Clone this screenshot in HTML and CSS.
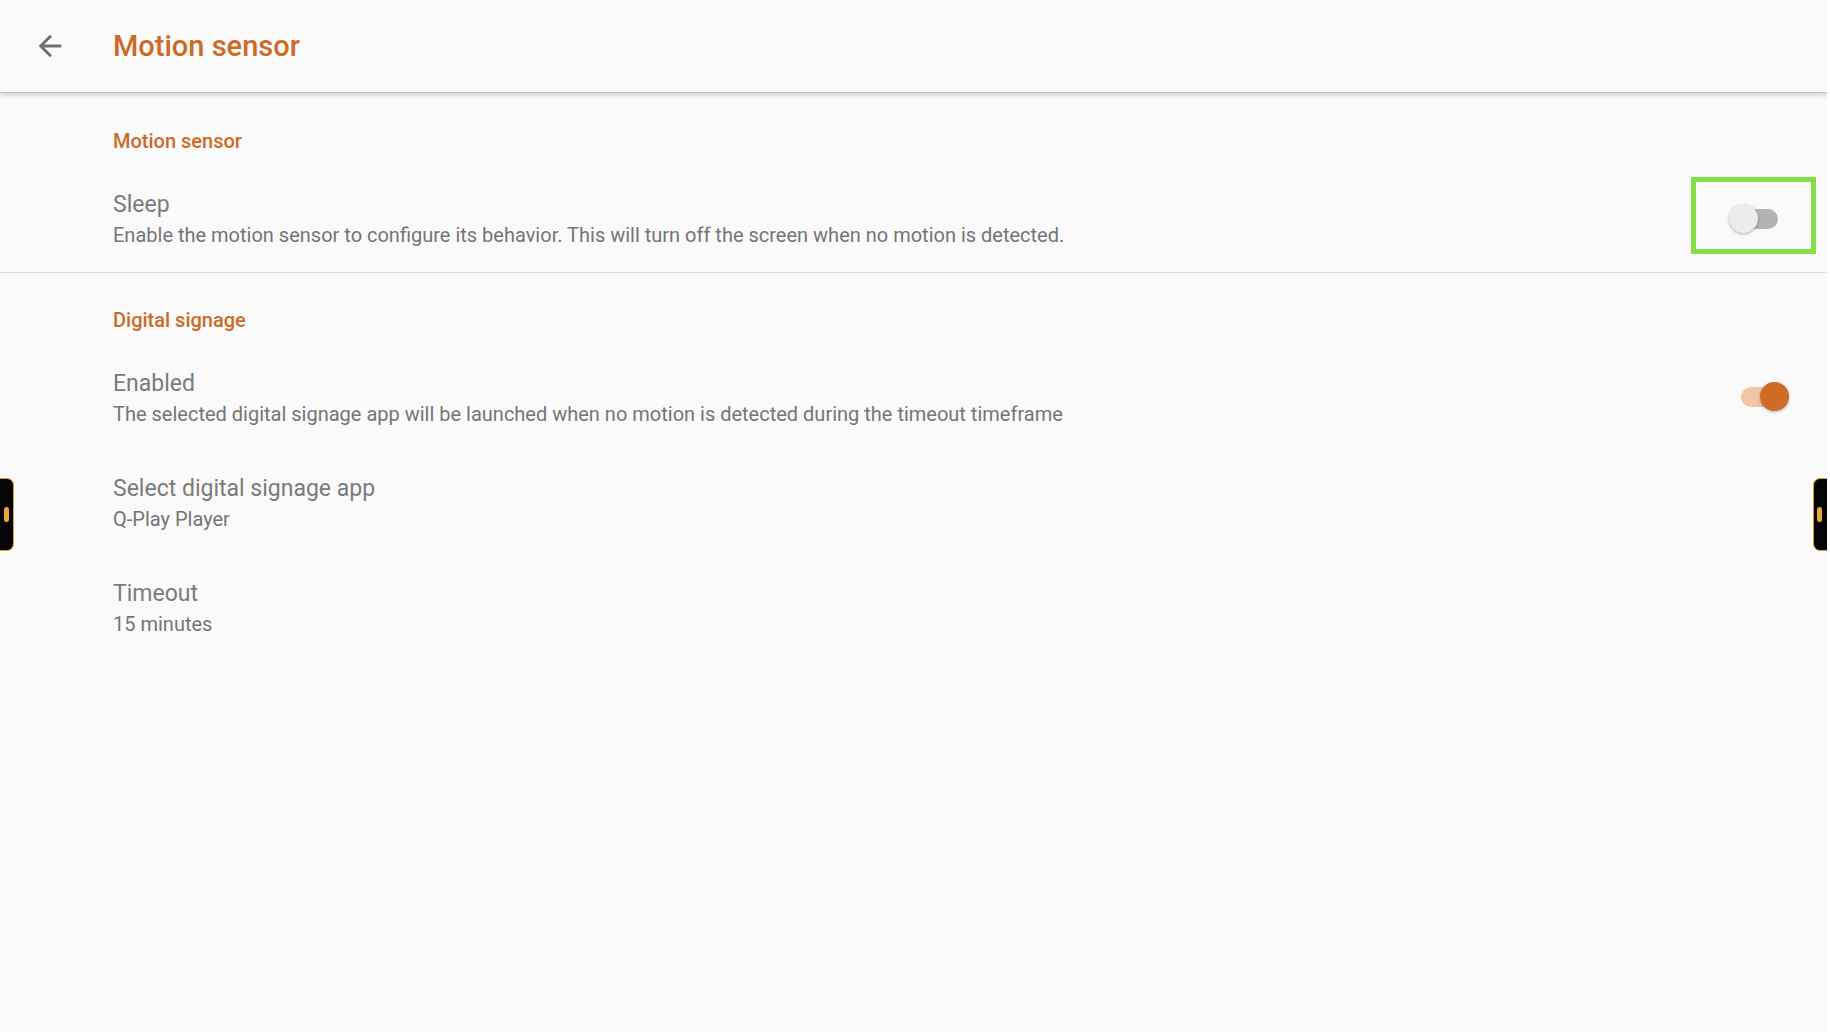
FILE: index.html
```html
<!DOCTYPE html>
<html lang="en">
<head>
  <meta charset="UTF-8" />
  <meta name="viewport" content="width=device-width, initial-scale=1.0"/>
  <title>Motion sensor</title>
  <link rel="stylesheet" href="styles.css">
</head>
<body>
  <div class="screen">
    <header class="topbar">
      <button class="back-btn" aria-label="Back">
        <svg viewBox="0 0 24 24" width="34" height="34"><path d="M20 11H7.83l5.59-5.59L12 4l-8 8 8 8 1.41-1.41L7.83 13H20v-2z" fill="currentColor"/></svg>
      </button>
      <h1 class="topbar-title">Motion sensor</h1>
    </header>

    <section class="pref-group pref-group--divided">
      <h2 class="pref-category">Motion sensor</h2>
      <div class="pref-item">
        <div class="pref-text">
          <div class="pref-title">Sleep</div>
          <div class="pref-summary">Enable the motion sensor to configure its behavior. This will turn off the screen when no motion is detected.</div>
        </div>
        <div class="highlight">
          <span class="switch"><span class="switch-track"></span><span class="switch-thumb"></span></span>
        </div>
      </div>
    </section>

    <section class="pref-group">
      <h2 class="pref-category">Digital signage</h2>
      <div class="pref-item">
        <div class="pref-text">
          <div class="pref-title">Enabled</div>
          <div class="pref-summary">The selected digital signage app will be launched when no motion is detected during the timeout timeframe</div>
        </div>
        <span class="switch switch--on"><span class="switch-track"></span><span class="switch-thumb"></span></span>
      </div>
      <div class="pref-item">
        <div class="pref-text">
          <div class="pref-title">Select digital signage app</div>
          <div class="pref-summary">Q-Play Player</div>
        </div>
      </div>
      <div class="pref-item">
        <div class="pref-text">
          <div class="pref-title">Timeout</div>
          <div class="pref-summary">15 minutes</div>
        </div>
      </div>
    </section>

    <div class="edge-handle edge-handle--left"><span></span></div>
    <div class="edge-handle edge-handle--right"><span></span></div>
  </div>
</body>
</html>
```

FILE: styles.css
```css
body {
  margin: 0;
  padding: 0;
  background: #ffffff;
  font-family: Roboto, "Noto Sans", sans-serif;
}
.screen {
  position: relative;
  width: 1827px;
  height: 1032px;
  background: #fafafa;
  overflow: hidden;
}
.topbar {
  height: 92px;
  display: flex;
  align-items: center;
  background: #fafafa;
  box-shadow: 0 1px 0 #c4c4c4, 0 3px 5px rgba(0, 0, 0, 0.18);
  position: relative;
  z-index: 1;
}
.back-btn {
  border: 0;
  background: none;
  padding: 0;
  margin-left: 33px;
  width: 34px;
  height: 34px;
  color: #6e6e6e;
  display: flex;
}
.topbar-title {
  margin: 0 0 0 46px;
  font-size: 29px;
  font-weight: 500;
  color: #cc6b26;
}
.pref-group {
  padding-top: 37px;
}
.pref-group--divided {
  border-bottom: 1px solid #dcdcdc;
}
.pref-group--divided + .pref-group {
  padding-top: 35px;
}
.pref-category {
  margin: 0 0 14px 113px;
  font-size: 20px;
  line-height: 24px;
  font-weight: 500;
  color: #cc6b26;
}
.pref-item {
  display: flex;
  align-items: center;
  padding: 23px 0 22px 113px;
}
.pref-text {
  flex: 1;
}
.pref-title {
  font-size: 23px;
  line-height: 30px;
  color: #7a7a7a;
}
.pref-summary {
  font-size: 20px;
  line-height: 30px;
  color: #757575;
}
.switch {
  position: relative;
  width: 50px;
  height: 30px;
  display: block;
  margin: -4px 38px 0 0;
}
.switch-track {
  position: absolute;
  left: 2px;
  top: 5px;
  width: 47px;
  height: 20px;
  border-radius: 10px;
  background: #b3b3b3;
}
.switch-thumb {
  position: absolute;
  left: 0;
  top: 0;
  width: 29px;
  height: 29px;
  border-radius: 50%;
  background: #ececec;
  box-shadow: 0 1px 3px rgba(0, 0, 0, 0.3);
}
.switch--on .switch-track {
  background: #f1c6a6;
}
.switch--on .switch-thumb {
  left: 21px;
  background: #cf6a27;
}
.highlight {
  border: 5px solid #84de46;
  width: 125px;
  height: 77px;
  margin: -14px 11px -5px 0;
  display: flex;
  align-items: center;
  justify-content: center;
  box-sizing: border-box;
}
.highlight .switch {
  margin: 7px 0 0 0;
}
.edge-handle {
  position: absolute;
  top: 478px;
  width: 14px;
  height: 73px;
  background: #050505;
  border: 1px solid #d8a23a;
  box-sizing: border-box;
  display: flex;
  align-items: center;
}
.edge-handle span {
  width: 5px;
  height: 15px;
  border-radius: 3px;
  background: #e6a63a;
}
.edge-handle--left {
  left: 0;
  border-left: 0;
  border-radius: 0 7px 7px 0;
  justify-content: flex-start;
  padding-left: 4px;
}
.edge-handle--right {
  right: 0;
  border-right: 0;
  border-radius: 7px 0 0 7px;
  justify-content: flex-start;
  padding-left: 3px;
}
```
